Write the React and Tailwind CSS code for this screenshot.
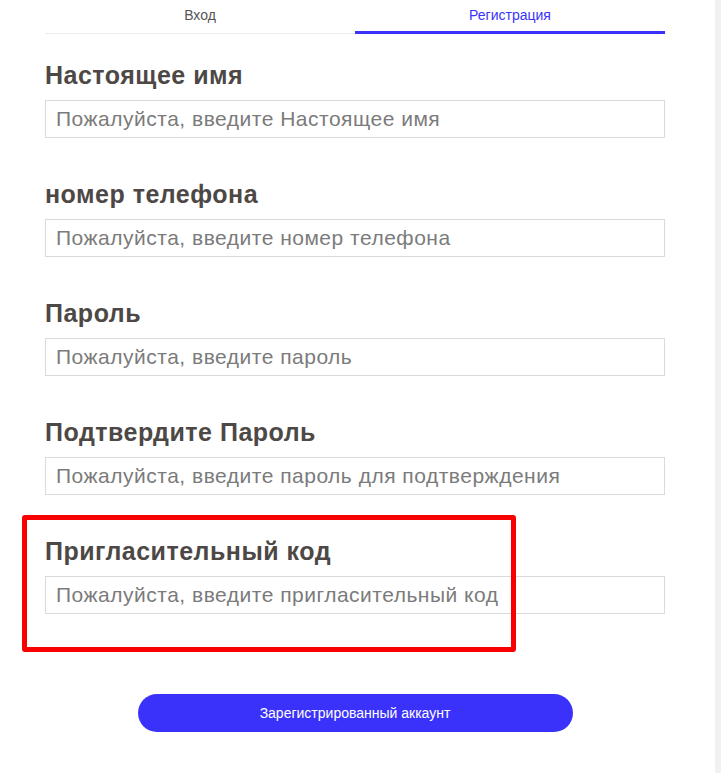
import React, { useState } from 'react';

const fields = [
    { label: 'Настоящее имя', placeholder: 'Пожалуйста, введите Настоящее имя' },
    { label: 'номер телефона', placeholder: 'Пожалуйста, введите номер телефона' },
    { label: 'Пароль', placeholder: 'Пожалуйста, введите пароль', type: 'password' },
    { label: 'Подтвердите Пароль', placeholder: 'Пожалуйста, введите пароль для подтверждения', type: 'password' },
    { label: 'Пригласительный код', placeholder: 'Пожалуйста, введите пригласительный код' },
];

const App = () => {
    const [tab, setTab] = useState('register');

    return (
        <div className="flex min-h-[773px] w-[721px] bg-[#f3f3f3] font-[family-name:'Liberation_Sans',Arial,sans-serif]">
            <div className="relative w-[715px] bg-white pl-[45px] pr-[50px] pb-[41px]">
                {/* Tabs */}
                <div className="flex h-[34px] border-b border-[#ececec]">
                    <button
                        onClick={() => setTab('login')}
                        className={`flex-1 self-start h-[34px] pb-[2px] border-b-[3px] text-[14px] leading-[18px] ${tab === 'login' ? 'text-[#3a32fa] border-[#3a32fa]' : 'text-[#555] border-transparent'}`}
                    >
                        Вход
                    </button>
                    <button
                        onClick={() => setTab('register')}
                        className={`flex-1 self-start h-[34px] pb-[2px] border-b-[3px] text-[14px] leading-[18px] ${tab === 'register' ? 'text-[#3a32fa] border-[#3a32fa]' : 'text-[#555] border-transparent'}`}
                    >
                        Регистрация
                    </button>
                </div>

                {/* Form fields */}
                <div className="mt-[26px] flex flex-col gap-[41px]">
                    {fields.map((f) => (
                        <div key={f.label} className="flex flex-col">
                            <label className="mb-[10px] text-[25px] leading-[30px] font-bold tracking-[0.5px] text-[#4d4845]">{f.label}</label>
                            <input
                                type={f.type || 'text'}
                                placeholder={f.placeholder}
                                className="h-[38px] w-full border border-[#dadada] px-[10px] text-[21px] tracking-[0.5px] text-[#333] outline-none placeholder:text-[#7b7b7b]"
                            />
                        </div>
                    ))}
                </div>

                {/* Highlight box */}
                <div className="pointer-events-none absolute left-[22px] top-[515px] h-[137px] w-[494px] rounded-[3px] border-[5px] border-[#f80000]"></div>

                <div className="mt-[80px] flex justify-center">
                    <button className="h-[38px] w-[435px] rounded-full bg-[#3a32fa] text-[14px] text-white">
                        Зарегистрированный аккаунт
                    </button>
                </div>
            </div>
            <div className="flex-1 bg-[#f1f1f1]"></div>
        </div>
    );
};

export default App;
